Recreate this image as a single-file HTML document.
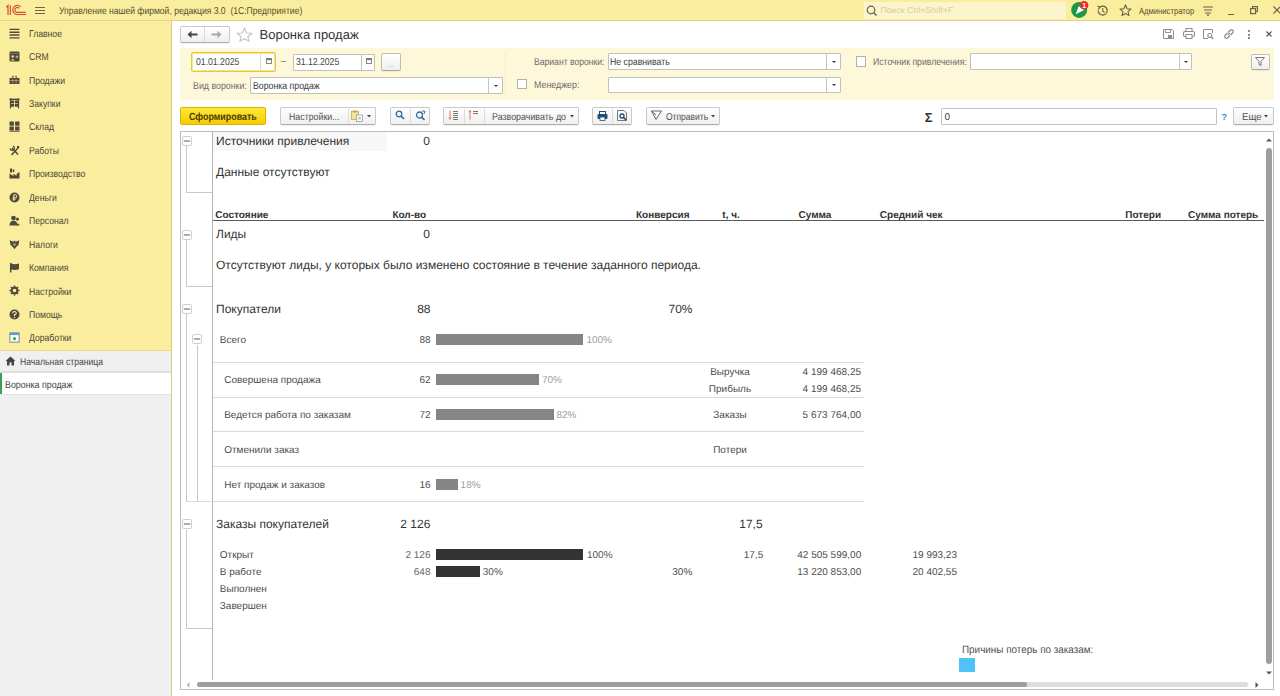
<!DOCTYPE html>
<html><head><meta charset="utf-8"><title>Воронка продаж</title>
<style>
html,body{margin:0;padding:0;width:1280px;height:696px;overflow:hidden;background:#fff;}
body{position:relative;font-family:"Liberation Sans", sans-serif;}
.t{position:absolute;white-space:nowrap;line-height:1;font-family:"Liberation Sans", sans-serif;text-rendering:geometricPrecision;}
.r{position:absolute;box-sizing:border-box;}
svg.r{overflow:visible;}
</style></head><body>
<div class="r" style="left:0px;top:0px;width:1280px;height:20px;background:#FBED9E;"></div><div class="r" style="left:0px;top:20px;width:1280px;height:1px;background:#E3D48A;"></div><svg class="r" style="left:6px;top:4px" width="21" height="12" viewBox="0 0 21 12"><g fill="none" stroke="#D64B2A" stroke-width="1.15">
<path d="M0.4 3.4 L2 1.4 V10.9"/><path d="M4.3 1.2 V10.9"/>
<path d="M14.8 2.8 A4.6 4.6 0 1 0 11.6 10.5 H19.9"/><path d="M13.2 4.5 A2.4 2.4 0 1 0 11.6 8.3 H19.9"/>
</g></svg><div class="r" style="left:35px;top:6.5px;width:10px;height:1.4px;background:#6E6540;"></div><div class="r" style="left:35px;top:9.5px;width:10px;height:1.4px;background:#6E6540;"></div><div class="r" style="left:35px;top:12.5px;width:10px;height:1.4px;background:#6E6540;"></div><div class="t" style="left:58.5px;top:7.30px;font-size:10px;color:#544D2E;font-weight:400;transform:scaleX(0.857);transform-origin:0 0;">Управление нашей фирмой, редакция 3.0&nbsp; (1С:Предприятие)</div><div class="r" style="left:864px;top:2px;width:202px;height:16.5px;background:#FCF4CC;"></div><svg class="r" style="left:866px;top:5px" width="12" height="12" viewBox="0 0 12 12"><circle cx="5" cy="5" r="3.8" fill="none" stroke="#6A6245" stroke-width="1.2"/><path d="M7.8 7.8 L10.5 10.5" stroke="#6A6245" stroke-width="1.5"/></svg><div class="t" style="left:880.5px;top:6.30px;font-size:8.7px;color:#D6CDA6;font-weight:400;">Поиск Ctrl+Shift+F</div><svg class="r" style="left:1070px;top:0px" width="20" height="19" viewBox="0 0 20 19"><circle cx="9.2" cy="9.9" r="8" fill="#1A9A48"/>
<path d="M5.8 14.2 L8.6 6.2 L14.5 9.8 Z" fill="#fff"/>
<circle cx="14.1" cy="5.3" r="4.3" fill="#E52D2D"/>
<text x="14.1" y="7.9" font-size="7" font-family="Liberation Sans" font-weight="700" fill="#fff" text-anchor="middle">1</text></svg><svg class="r" style="left:1096px;top:4px" width="13" height="13" viewBox="0 0 13 13"><path d="M2.2 6.5 A4.5 4.5 0 1 0 3.6 3.3" fill="none" stroke="#6A6245" stroke-width="1.2"/><path d="M1.5 2 L3.8 3.4 L2.2 5.6" fill="none" stroke="#6A6245" stroke-width="1.1"/><path d="M6.7 4 V7 L8.6 8.6" fill="none" stroke="#6A6245" stroke-width="1.1"/></svg><svg class="r" style="left:1119px;top:4px" width="13" height="13" viewBox="0 0 13 13"><path d="M6.5 1 L8.1 4.8 L12 5.1 L9 7.7 L10 11.6 L6.5 9.5 L3 11.6 L4 7.7 L1 5.1 L4.9 4.8 Z" fill="none" stroke="#6A6245" stroke-width="1.1" stroke-linejoin="round"/></svg><div class="t" style="left:1139px;top:6.90px;font-size:9px;color:#544D2E;font-weight:400;transform:scaleX(0.85);transform-origin:0 0;">Администратор</div><svg class="r" style="left:1202px;top:4px" width="12" height="13" viewBox="0 0 12 13"><path d="M1 3 H11 M2 6 H10 M3 9 H9" stroke="#6A6245" stroke-width="1.1"/><path d="M4.5 10.5 L7.5 10.5 L6 12.5 Z" fill="#6A6245"/></svg><div class="r" style="left:1227.5px;top:13.5px;width:6.5px;height:1.2px;background:#6A6245;"></div><svg class="r" style="left:1250px;top:6px" width="9" height="9" viewBox="0 0 9 9"><rect x="0.6" y="2.6" width="5" height="5" fill="none" stroke="#6A6245" stroke-width="1.2"/><path d="M2.5 2.5 V0.6 H7.4 V5.5 H5.6" fill="none" stroke="#6A6245" stroke-width="1.1"/></svg><svg class="r" style="left:1273px;top:6px" width="8" height="8" viewBox="0 0 8 8"><path d="M0.5 0.5 L7.5 7.5 M7.5 0.5 L0.5 7.5" stroke="#6A6245" stroke-width="1.1"/></svg><div class="r" style="left:0px;top:21px;width:171px;height:329px;background:#FBED9E;"></div><div class="r" style="left:171px;top:21px;width:1px;height:675px;background:#D8CB8C;"></div><div class="r" style="left:0px;top:350px;width:171px;height:346px;background:#F0F0F0;"></div><div class="r" style="left:0px;top:349.5px;width:171px;height:1px;background:#E9D98C;"></div><div class="r" style="left:0px;top:371px;width:171px;height:2px;background:#DEDEDE;"></div><div class="r" style="left:0px;top:373px;width:171px;height:21px;background:#FFFFFF;"></div><div class="r" style="left:0px;top:394px;width:171px;height:1px;background:#E4E4E4;"></div><div class="r" style="left:0px;top:373px;width:1.5px;height:21px;background:#3A9E5E;"></div><svg class="r" style="left:9px;top:27.5px" width="11" height="11" viewBox="0 0 11 11"><g transform="translate(0.5,0.5)"><path d="M0 0.9 H10 M0 3.7 H10 M0 6.5 H10 M0 9.3 H10" stroke="#4F4A3A" stroke-width="1.35"/></g></svg><div class="t" style="left:29px;top:29.60px;font-size:10px;color:#4A4535;font-weight:400;transform:scaleX(0.863);transform-origin:0 0;">Главное</div><svg class="r" style="left:9px;top:51.0px" width="11" height="11" viewBox="0 0 11 11"><g transform="translate(0.5,0.5)"><rect x="0" y="0" width="10" height="10" rx="1.2" fill="#4F4A3A"/><rect x="0.8" y="1.5" width="8.4" height="0.7" fill="#FBED9E" opacity=".35"/><circle cx="3.2" cy="5" r="1.3" fill="#FBED9E" opacity=".9"/><path d="M1.2 9 Q3.2 5.8 5.2 9Z" fill="#FBED9E" opacity=".9"/><rect x="6.2" y="4.2" width="2.4" height="2.2" fill="#FBED9E" opacity=".6"/></g></svg><div class="t" style="left:29px;top:53.05px;font-size:10px;color:#4A4535;font-weight:400;transform:scaleX(0.863);transform-origin:0 0;">CRM</div><svg class="r" style="left:9px;top:74.4px" width="11" height="11" viewBox="0 0 11 11"><g transform="translate(0.5,0.5)"><rect x="0" y="3.5" width="10" height="6" rx=".5" fill="#4F4A3A"/><path d="M3 3.5 L3.8 1.2 M7 3.5 L6.2 1.2" stroke="#4F4A3A" stroke-width="1.1"/><path d="M0.5 6 H9.5" stroke="#FBED9E" stroke-width=".7" opacity=".6"/><path d="M3.3 4 V9 M6.6 4 V9" stroke="#FBED9E" stroke-width=".7" opacity=".6"/></g></svg><div class="t" style="left:29px;top:76.50px;font-size:10px;color:#4A4535;font-weight:400;transform:scaleX(0.863);transform-origin:0 0;">Продажи</div><svg class="r" style="left:9px;top:97.8px" width="11" height="11" viewBox="0 0 11 11"><g transform="translate(0.5,0.5)"><path d="M0 0.8 H10" stroke="#4F4A3A" stroke-width="1.4"/><rect x="1" y="2" width="3.6" height="2.8" fill="#4F4A3A"/><rect x="5.4" y="2" width="3.6" height="2.8" fill="#4F4A3A"/><rect x="1" y="5.4" width="3.6" height="2.8" fill="#4F4A3A"/><rect x="5.4" y="5.4" width="3.6" height="2.8" fill="#4F4A3A"/><path d="M1 0 V10 M9 0 V10" stroke="#4F4A3A" stroke-width="1.2"/></g></svg><div class="t" style="left:29px;top:99.95px;font-size:10px;color:#4A4535;font-weight:400;transform:scaleX(0.863);transform-origin:0 0;">Закупки</div><svg class="r" style="left:9px;top:121.3px" width="11" height="11" viewBox="0 0 11 11"><g transform="translate(0.5,0.5)"><rect x="0" y="0" width="4.4" height="4.2" fill="#4F4A3A"/><rect x="5.6" y="0" width="4.4" height="4.2" fill="#4F4A3A"/><rect x="0" y="5" width="4.4" height="4" fill="#4F4A3A"/><rect x="5.6" y="5" width="4.4" height="4" fill="#4F4A3A"/><rect x="0" y="9.3" width="10" height="0.9" fill="#4F4A3A"/></g></svg><div class="t" style="left:29px;top:123.40px;font-size:10px;color:#4A4535;font-weight:400;transform:scaleX(0.863);transform-origin:0 0;">Склад</div><svg class="r" style="left:9px;top:144.8px" width="11" height="11" viewBox="0 0 11 11"><g transform="translate(0.5,0.5)"><path d="M2 9.5 L8.5 2.5 M2.5 2.5 L8.5 9" stroke="#4F4A3A" stroke-width="1.5"/><path d="M0.5 3 A2.2 2.2 0 1 0 3.5 0.5" fill="none" stroke="#4F4A3A" stroke-width="1.3"/><rect x="7.5" y="0.5" width="2.2" height="2.2" fill="#4F4A3A"/></g></svg><div class="t" style="left:29px;top:146.85px;font-size:10px;color:#4A4535;font-weight:400;transform:scaleX(0.863);transform-origin:0 0;">Работы</div><svg class="r" style="left:9px;top:168.2px" width="11" height="11" viewBox="0 0 11 11"><g transform="translate(0.5,0.5)"><path d="M0 10 V5 L4 7.5 V5 L7 7.5 V5.5 L10 3.5 V10 Z" fill="#4F4A3A"/><rect x="0.5" y="0" width="2" height="4" fill="#4F4A3A"/><rect x="3.2" y="1" width="1.6" height="2.5" fill="#4F4A3A"/></g></svg><div class="t" style="left:29px;top:170.30px;font-size:10px;color:#4A4535;font-weight:400;transform:scaleX(0.863);transform-origin:0 0;">Производство</div><svg class="r" style="left:9px;top:191.7px" width="11" height="11" viewBox="0 0 11 11"><g transform="translate(0.5,0.5)"><circle cx="5" cy="5" r="5" fill="#4F4A3A"/><path d="M4.3 8.3 V2.3 H5.9 A1.5 1.5 0 0 1 5.9 5.3 H3.2 M3.2 6.7 H6" stroke="#FBED9E" stroke-width="1" fill="none"/></g></svg><div class="t" style="left:29px;top:193.75px;font-size:10px;color:#4A4535;font-weight:400;transform:scaleX(0.863);transform-origin:0 0;">Деньги</div><svg class="r" style="left:9px;top:215.1px" width="11" height="11" viewBox="0 0 11 11"><g transform="translate(0.5,0.5)"><circle cx="4" cy="2.6" r="2.4" fill="#4F4A3A"/><path d="M0 10 Q0 5.3 4 5.3 Q8 5.3 8 10Z" fill="#4F4A3A"/><circle cx="8" cy="3.6" r="1.6" fill="#4F4A3A"/><path d="M7 10 Q9 6 10 10Z" fill="#4F4A3A"/></g></svg><div class="t" style="left:29px;top:217.20px;font-size:10px;color:#4A4535;font-weight:400;transform:scaleX(0.863);transform-origin:0 0;">Персонал</div><svg class="r" style="left:9px;top:238.5px" width="11" height="11" viewBox="0 0 11 11"><g transform="translate(0.5,0.5)"><path d="M5 1 L6.3 2.3 L9.8 0.8 L9 5.3 L6.5 7.8 L5 9.8 L3.5 7.8 L1 5.3 L0.2 0.8 L3.7 2.3 Z" fill="#4F4A3A"/><circle cx="5" cy="5" r="1.4" fill="#FBED9E" opacity=".5"/></g></svg><div class="t" style="left:29px;top:240.65px;font-size:10px;color:#4A4535;font-weight:400;transform:scaleX(0.863);transform-origin:0 0;">Налоги</div><svg class="r" style="left:9px;top:262.0px" width="11" height="11" viewBox="0 0 11 11"><g transform="translate(0.5,0.5)"><path d="M1.2 0.5 V10" stroke="#4F4A3A" stroke-width="1.5"/><path d="M1.5 1 Q5 2.6 9.5 1 V6.8 Q5 8.4 1.5 6.8Z" fill="#4F4A3A"/></g></svg><div class="t" style="left:29px;top:264.10px;font-size:10px;color:#4A4535;font-weight:400;transform:scaleX(0.863);transform-origin:0 0;">Компания</div><svg class="r" style="left:9px;top:285.4px" width="11" height="11" viewBox="0 0 11 11"><g transform="translate(0.5,0.5)"><circle cx="5" cy="5" r="2.8" fill="none" stroke="#4F4A3A" stroke-width="2"/><path d="M5 0 V2 M5 8 V10 M0 5 H2 M8 5 H10 M1.5 1.5 L3 3 M7 7 L8.5 8.5 M8.5 1.5 L7 3 M3 7 L1.5 8.5" stroke="#4F4A3A" stroke-width="1.7"/></g></svg><div class="t" style="left:29px;top:287.55px;font-size:10px;color:#4A4535;font-weight:400;transform:scaleX(0.863);transform-origin:0 0;">Настройки</div><svg class="r" style="left:9px;top:308.9px" width="11" height="11" viewBox="0 0 11 11"><g transform="translate(0.5,0.5)"><circle cx="5" cy="5" r="5" fill="#4F4A3A"/><path d="M3.3 3.8 Q3.3 2 5 2 Q6.8 2 6.8 3.6 Q6.8 4.7 5 5.4 V6.4" stroke="#FBED9E" stroke-width="1.2" fill="none"/><circle cx="5" cy="8" r=".75" fill="#FBED9E"/></g></svg><div class="t" style="left:29px;top:311.00px;font-size:10px;color:#4A4535;font-weight:400;transform:scaleX(0.863);transform-origin:0 0;">Помощь</div><svg class="r" style="left:9px;top:332.3px" width="11" height="11" viewBox="0 0 11 11"><g transform="translate(0.5,0.5)"><rect x="0.4" y="0.4" width="9.2" height="9.2" fill="#fff" stroke="#5F6B7A" stroke-width="0.8"/><rect x="0.4" y="0.4" width="9.2" height="2.2" fill="#5B9BD5"/><circle cx="5" cy="6.2" r="1.6" fill="#3DAA4A"/></g></svg><div class="t" style="left:29px;top:334.45px;font-size:10px;color:#4A4535;font-weight:400;transform:scaleX(0.863);transform-origin:0 0;">Доработки</div><svg class="r" style="left:5px;top:356px" width="11" height="10" viewBox="0 0 11 10"><path d="M5.5 0.5 L10.5 5 H9 V9.5 H6.5 V6.5 H4.5 V9.5 H2 V5 H0.5 Z" fill="#444"/></svg><div class="t" style="left:20.2px;top:358.30px;font-size:10px;color:#444;font-weight:400;transform:scaleX(0.8577);transform-origin:0 0;">Начальная страница</div><div class="t" style="left:4.7px;top:380.80px;font-size:10px;color:#444;font-weight:400;transform:scaleX(0.8843);transform-origin:0 0;">Воронка продаж</div><div class="r" style="left:172px;top:21px;width:1108px;height:675px;background:#fff;"></div>
<div class="r" style="left:180px;top:26px;width:50px;height:17px;background:linear-gradient(#FFFFFF,#EFEFEF);border:1px solid #C9C9C9;border-bottom-color:#ADADAD;border-radius:2px;box-shadow:0 1px 1px rgba(0,0,0,.06);"></div><div class="r" style="left:204px;top:27px;width:1px;height:15px;background:#DCDCDC;"></div><svg class="r" style="left:187px;top:30px" width="11" height="9" viewBox="0 0 11 9"><path d="M0.5 4.5 L4.5 0.8 L4.5 3.5 H10.5 V5.5 H4.5 V8.2 Z" fill="#444"/></svg><svg class="r" style="left:211px;top:30px" width="11" height="9" viewBox="0 0 11 9"><path d="M10.5 4.5 L6.5 0.8 L6.5 3.5 H0.5 V5.5 H6.5 V8.2 Z" fill="#A8A8A8"/></svg><svg class="r" style="left:236px;top:27px" width="17" height="15" viewBox="0 0 17 15"><path d="M8.5 1 L10.6 6 L16 6.3 L11.8 9.7 L13.2 14.3 L8.5 11.7 L3.8 14.3 L5.2 9.7 L1 6.3 L6.4 6 Z" fill="none" stroke="#C4C4C4" stroke-width="1.1" stroke-linejoin="round"/></svg><div class="t" style="left:259.5px;top:28.00px;font-size:13px;color:#333;font-weight:400;">Воронка продаж</div><svg class="r" style="left:1163px;top:29px" width="11" height="10" viewBox="0 0 11 10"><path d="M0.5 0.5 H9 L10.5 2 V9.5 H0.5 Z" fill="none" stroke="#8C8C8C" stroke-width="1"/><rect x="2.5" y="0.5" width="5" height="3" fill="none" stroke="#8C8C8C" stroke-width=".9"/><rect x="5" y="6" width="4" height="3.5" fill="#8C8C8C"/></svg><svg class="r" style="left:1183px;top:28px" width="12" height="11" viewBox="0 0 12 11"><rect x="3" y="0.5" width="6" height="3" fill="none" stroke="#8C8C8C" stroke-width="1"/><rect x="0.5" y="3.5" width="11" height="5" rx="1.5" fill="none" stroke="#8C8C8C" stroke-width="1.1"/><rect x="3" y="6.5" width="6" height="4" fill="#fff" stroke="#8C8C8C" stroke-width="1"/></svg><svg class="r" style="left:1203px;top:29px" width="11" height="11" viewBox="0 0 11 11"><path d="M8.5 0.5 H0.5 V9.5 H5" fill="none" stroke="#8C8C8C" stroke-width="1"/><path d="M0.5 0.5 H9.5 V4" fill="none" stroke="#8C8C8C" stroke-width="1"/><circle cx="6.8" cy="6.5" r="2" fill="none" stroke="#8C8C8C" stroke-width="1.1"/><path d="M8.3 8 L10.3 10" stroke="#8C8C8C" stroke-width="1.3"/></svg><svg class="r" style="left:1223px;top:28px" width="12" height="12" viewBox="0 0 12 12"><path d="M5 7 L7 5" stroke="#8C8C8C" stroke-width="1.1"/><path d="M4.5 5 L2 7.5 A1.8 1.8 0 0 0 4.5 10 L7 7.5" fill="none" stroke="#8C8C8C" stroke-width="1.2"/><path d="M7.5 7 L10 4.5 A1.8 1.8 0 0 0 7.5 2 L5 4.5" fill="none" stroke="#8C8C8C" stroke-width="1.2"/></svg><div class="r" style="left:1247.5px;top:30px;width:2px;height:2px;background:#8C8C8C;"></div><div class="r" style="left:1247.5px;top:33.5px;width:2px;height:2px;background:#8C8C8C;"></div><div class="r" style="left:1247.5px;top:37px;width:2px;height:2px;background:#8C8C8C;"></div><svg class="r" style="left:1266px;top:31px" width="6" height="6" viewBox="0 0 6 6"><path d="M0.5 0.5 L5.5 5.5 M5.5 0.5 L0.5 5.5" stroke="#555" stroke-width="1.1"/></svg><div class="r" style="left:180px;top:48px;width:1094px;height:52px;background:#FEF8DA;"></div><div class="r" style="left:505px;top:52px;width:1px;height:46px;border-left:1px dotted #F0E6C2;"></div><div class="r" style="left:191px;top:52px;width:85px;height:20px;background:#fff;border:1px solid #E3C64C;box-shadow:inset 0 0 0 1px #F8E58A;border-radius:2px;"></div><div class="r" style="left:260px;top:54px;width:1px;height:16px;background:#D8D8D8;"></div><svg class="r" style="left:266px;top:57.5px" width="6" height="6" viewBox="0 0 6 6"><rect x="0.5" y="0.5" width="5" height="5" fill="none" stroke="#888" stroke-width="1"/><rect x="0.5" y="0.5" width="5" height="1.6" fill="#777"/></svg><div class="t" style="left:195.6px;top:57.90px;font-size:10px;color:#444;font-weight:400;transform:scaleX(0.8669);transform-origin:0 0;">01.01.2025</div><div class="t" style="left:281px;top:57.20px;font-size:9px;color:#555;font-weight:400;">–</div><div class="r" style="left:293px;top:53.5px;width:81.5px;height:17px;background:#fff;border:1px solid #C4C0B5;border-radius:1px;"></div><div class="r" style="left:360.5px;top:54px;width:1px;height:16px;background:#C9C5BA;"></div><svg class="r" style="left:365.5px;top:57.5px" width="6" height="6" viewBox="0 0 6 6"><rect x="0.5" y="0.5" width="5" height="5" fill="none" stroke="#888" stroke-width="1"/><rect x="0.5" y="0.5" width="5" height="1.6" fill="#777"/></svg><div class="t" style="left:296px;top:57.90px;font-size:10px;color:#444;font-weight:400;transform:scaleX(0.8629);transform-origin:0 0;">31.12.2025</div><div class="r" style="left:381px;top:53px;width:20px;height:18px;background:linear-gradient(#FFFFFF,#EFEFEF);border:1px solid #C2BDB0;border-bottom-color:#ABA697;border-radius:2px;box-shadow:0 1px 1px rgba(0,0,0,.06);"></div><div class="t" style="left:387.5px;top:62.00px;font-size:7px;color:#999;font-weight:400;">...</div><div class="t" style="left:193px;top:81.90px;font-size:10px;color:#6A6A6A;font-weight:400;transform:scaleX(0.8817);transform-origin:0 0;">Вид воронки:</div><div class="r" style="left:250px;top:77px;width:252.5px;height:16.5px;background:#fff;border:1px solid #C4C0B5;border-radius:1px;"></div><div class="r" style="left:488px;top:78px;width:1px;height:14.5px;background:#C9C5BA;"></div><svg class="r" style="left:493.5px;top:84.5px" width="4" height="2" viewBox="0 0 4 2"><path d="M0 0 H4 L2 2Z" fill="#333"/></svg><div class="t" style="left:252.9px;top:81.90px;font-size:10px;color:#3A3A3A;font-weight:400;transform:scaleX(0.8751);transform-origin:0 0;">Воронка продаж</div><div class="t" style="left:534.4px;top:58.20px;font-size:10px;color:#6A6A6A;font-weight:400;transform:scaleX(0.8601);transform-origin:0 0;">Вариант воронки:</div><div class="r" style="left:608px;top:53px;width:233px;height:17px;background:#fff;border:1px solid #C4C0B5;border-radius:1px;"></div><div class="r" style="left:826px;top:54px;width:1px;height:15px;background:#C9C5BA;"></div><svg class="r" style="left:831.5px;top:60.5px" width="4" height="2" viewBox="0 0 4 2"><path d="M0 0 H4 L2 2Z" fill="#333"/></svg><div class="t" style="left:610.4px;top:58.20px;font-size:10px;color:#3A3A3A;font-weight:400;transform:scaleX(0.8723);transform-origin:0 0;">Не сравнивать</div><div class="r" style="left:516.5px;top:78.5px;width:10.5px;height:10.5px;background:#fff;border:1px solid #B5B1A6;"></div><div class="t" style="left:534.2px;top:81.40px;font-size:10px;color:#6A6A6A;font-weight:400;transform:scaleX(0.8850);transform-origin:0 0;">Менеджер:</div><div class="r" style="left:608px;top:76.5px;width:233px;height:16px;background:#fff;border:1px solid #C4C0B5;border-radius:1px;"></div><div class="r" style="left:826px;top:77.5px;width:1px;height:14px;background:#C9C5BA;"></div><svg class="r" style="left:831.5px;top:84px" width="4" height="2" viewBox="0 0 4 2"><path d="M0 0 H4 L2 2Z" fill="#333"/></svg><div class="r" style="left:855.5px;top:56px;width:10px;height:10.5px;background:#fff;border:1px solid #B5B1A6;"></div><div class="t" style="left:872.6px;top:58.20px;font-size:10px;color:#6A6A6A;font-weight:400;transform:scaleX(0.8664);transform-origin:0 0;">Источник привлечения:</div><div class="r" style="left:970px;top:52.5px;width:222px;height:17.5px;background:#fff;border:1px solid #C4C0B5;border-radius:1px;"></div><div class="r" style="left:1178.5px;top:53.5px;width:1px;height:15.5px;background:#C9C5BA;"></div><svg class="r" style="left:1183.5px;top:60.5px" width="4" height="2" viewBox="0 0 4 2"><path d="M0 0 H4 L2 2Z" fill="#333"/></svg><div class="r" style="left:1250.5px;top:53.5px;width:19.5px;height:16.5px;background:linear-gradient(#FFFFFF,#EFEFEF);border:1px solid #C2BDB0;border-bottom-color:#ABA697;border-radius:2px;box-shadow:0 1px 1px rgba(0,0,0,.06);"></div><svg class="r" style="left:1255px;top:57px" width="10" height="9" viewBox="0 0 10 9"><path d="M0.5 0.5 H9.5 L6 4.5 V8.5 L4 7.5 V4.5 Z" fill="none" stroke="#777" stroke-width="1"/></svg><div class="r" style="left:180px;top:107px;width:86px;height:18px;background:linear-gradient(#FFE83A,#F5CC00);border:1px solid #D9B300;border-radius:2px;"></div><div class="t" style="left:189.2px;top:113.20px;font-size:10.3px;color:#473C00;font-weight:700;transform:scaleX(0.8646);transform-origin:0 0;">Сформировать</div><div class="r" style="left:279.5px;top:107px;width:96px;height:18px;background:linear-gradient(#FFFFFF,#EFEFEF);border:1px solid #C9C9C9;border-bottom-color:#ADADAD;border-radius:2px;box-shadow:0 1px 1px rgba(0,0,0,.06);"></div><div class="r" style="left:348px;top:108.5px;width:1px;height:15px;background:#DCDCDC;"></div><div class="t" style="left:288.5px;top:112.80px;font-size:10px;color:#505050;font-weight:400;transform:scaleX(0.8802);transform-origin:0 0;">Настройки...</div><svg class="r" style="left:351px;top:110px" width="13" height="12" viewBox="0 0 13 12"><rect x="0.5" y="1.5" width="7" height="8" fill="#F6E3A0" stroke="#C9A640" stroke-width=".8"/><rect x="2" y="0.5" width="4" height="2" fill="#C9A640"/><rect x="5.5" y="5" width="6" height="6.5" fill="#fff" stroke="#999" stroke-width=".8"/><path d="M7 7.5 H10 M7 9 H10" stroke="#888" stroke-width=".6"/></svg><svg class="r" style="left:367px;top:115px" width="5" height="3" viewBox="0 0 5 3"><path d="M0 0 H4 L2 2.5Z" fill="#444"/></svg><div class="r" style="left:389.5px;top:107px;width:40px;height:18px;background:linear-gradient(#FFFFFF,#EFEFEF);border:1px solid #C9C9C9;border-bottom-color:#ADADAD;border-radius:2px;box-shadow:0 1px 1px rgba(0,0,0,.06);"></div><div class="r" style="left:409.5px;top:108.5px;width:1px;height:15px;background:#DCDCDC;"></div><svg class="r" style="left:395px;top:110px" width="10" height="10" viewBox="0 0 10 10"><circle cx="4" cy="4" r="2.8" fill="none" stroke="#2E6DA4" stroke-width="1.3"/><path d="M6 6 L9 9" stroke="#2E6DA4" stroke-width="1.7"/></svg><svg class="r" style="left:415px;top:110px" width="11" height="11" viewBox="0 0 11 11"><circle cx="4.5" cy="5" r="3" fill="none" stroke="#2E6DA4" stroke-width="1.3"/><path d="M6.8 7.3 L9.5 10" stroke="#2E6DA4" stroke-width="1.7"/><path d="M7 0.8 L10 1.5 L8.8 4" fill="none" stroke="#2E6DA4" stroke-width="1"/></svg><div class="r" style="left:443px;top:107px;width:135.5px;height:18px;background:linear-gradient(#FFFFFF,#EFEFEF);border:1px solid #C9C9C9;border-bottom-color:#ADADAD;border-radius:2px;box-shadow:0 1px 1px rgba(0,0,0,.06);"></div><div class="r" style="left:463.5px;top:108.5px;width:1px;height:15px;background:#DCDCDC;"></div><div class="r" style="left:483.5px;top:108.5px;width:1px;height:15px;background:#DCDCDC;"></div><svg class="r" style="left:448px;top:110px" width="11" height="11" viewBox="0 0 11 11"><path d="M2 0.5 V9 M0.7 7.7 L2 9.5 L3.3 7.7" stroke="#E06A4E" stroke-width="0.9" fill="none"/><path d="M5 1.5 H10 M5 3.5 H10 M5 5.5 H10 M5 7.5 H10 M5 9.5 H10" stroke="#777" stroke-width="1"/></svg><svg class="r" style="left:468px;top:110px" width="11" height="11" viewBox="0 0 11 11"><path d="M2 9.5 V1 M0.7 2.3 L2 0.5 L3.3 2.3" stroke="#E06A4E" stroke-width="0.9" fill="none"/><path d="M5 1.5 H10 M5 3.5 H10" stroke="#777" stroke-width="1.2"/></svg><div class="t" style="left:492px;top:112.80px;font-size:10px;color:#505050;font-weight:400;transform:scaleX(0.8879);transform-origin:0 0;">Разворачивать до</div><svg class="r" style="left:569.5px;top:115px" width="5" height="3" viewBox="0 0 5 3"><path d="M0 0 H4 L2 2.5Z" fill="#444"/></svg><div class="r" style="left:592px;top:107px;width:40px;height:18px;background:linear-gradient(#FFFFFF,#EFEFEF);border:1px solid #C9C9C9;border-bottom-color:#ADADAD;border-radius:2px;box-shadow:0 1px 1px rgba(0,0,0,.06);"></div><div class="r" style="left:612px;top:108.5px;width:1px;height:15px;background:#DCDCDC;"></div><svg class="r" style="left:596.5px;top:110.5px" width="11" height="10" viewBox="0 0 11 10"><rect x="2.5" y="0.5" width="6" height="3" fill="none" stroke="#1F4E79" stroke-width="1"/><rect x="0.5" y="3" width="10" height="5" rx="1" fill="#1F4E79"/><rect x="3" y="6" width="5" height="3.5" fill="#fff" stroke="#1F4E79" stroke-width=".8"/></svg><svg class="r" style="left:617px;top:110px" width="10" height="11" viewBox="0 0 10 11"><path d="M0.5 0.5 H7 L9.5 3 V10.5 H0.5 Z" fill="none" stroke="#777" stroke-width="1"/><circle cx="5" cy="6" r="2" fill="none" stroke="#1F4E79" stroke-width="1.3"/><path d="M6.5 7.5 L9 10" stroke="#1F4E79" stroke-width="1.6"/></svg><div class="r" style="left:646px;top:107px;width:74px;height:18px;background:linear-gradient(#FFFFFF,#EFEFEF);border:1px solid #C9C9C9;border-bottom-color:#ADADAD;border-radius:2px;box-shadow:0 1px 1px rgba(0,0,0,.06);"></div><svg class="r" style="left:651px;top:110px" width="11" height="10" viewBox="0 0 11 10"><path d="M0.5 1 L10.5 1 L5 9.5 Z M0.5 1 L5 5" fill="none" stroke="#666" stroke-width="1"/></svg><div class="t" style="left:665.8px;top:112.80px;font-size:10px;color:#505050;font-weight:400;transform:scaleX(0.8489);transform-origin:0 0;">Отправить</div><svg class="r" style="left:711px;top:115px" width="5" height="3" viewBox="0 0 5 3"><path d="M0 0 H4 L2 2.5Z" fill="#444"/></svg><div class="t" style="left:924.8px;top:110.60px;font-size:13px;color:#333;font-weight:700;">Σ</div><div class="r" style="left:941px;top:108px;width:275.5px;height:17px;background:#fff;border:1px solid #C4C4C4;border-radius:1px;"></div><div class="t" style="left:944.6px;top:112.80px;font-size:10px;color:#444;font-weight:400;">0</div><div class="t" style="left:1221.5px;top:113.00px;font-size:9px;color:#3A8FD6;font-weight:700;">?</div><div class="r" style="left:1233px;top:107px;width:40.5px;height:18px;background:linear-gradient(#FFFFFF,#EFEFEF);border:1px solid #C9C9C9;border-bottom-color:#ADADAD;border-radius:2px;box-shadow:0 1px 1px rgba(0,0,0,.06);"></div><div class="t" style="left:1241.8px;top:112.80px;font-size:10px;color:#505050;font-weight:400;transform:scaleX(0.9578);transform-origin:0 0;">Еще</div><svg class="r" style="left:1264px;top:115px" width="5" height="3" viewBox="0 0 5 3"><path d="M0 0 H4 L2 2.5Z" fill="#444"/></svg><div class="r" style="left:180px;top:131px;width:1094px;height:559px;border:1px solid #BDBDBD;background:#fff;"></div><div class="r" style="left:213px;top:132px;width:174px;height:18.5px;background:#F7F7F7;"></div><div class="r" style="left:212px;top:132px;width:1px;height:547.5px;background:#B3B3B3;"></div><svg class="r" style="left:182px;top:135.5px" width="10" height="10" viewBox="0 0 10 10"><rect x="0.5" y="0.5" width="9" height="9" rx="1.5" fill="#fff" stroke="#CFCFCF" stroke-width="1"/><path d="M1.8 5 H8.2" stroke="#8A8A8A" stroke-width="1.4"/></svg><div class="r" style="left:186px;top:145.5px;width:1px;height:47.0px;background:#C8C8C8;"></div><div class="r" style="left:186px;top:192px;width:26px;height:1px;background:#C8C8C8;"></div><svg class="r" style="left:182px;top:229.5px" width="10" height="10" viewBox="0 0 10 10"><rect x="0.5" y="0.5" width="9" height="9" rx="1.5" fill="#fff" stroke="#CFCFCF" stroke-width="1"/><path d="M1.8 5 H8.2" stroke="#8A8A8A" stroke-width="1.4"/></svg><div class="r" style="left:186px;top:239.5px;width:1px;height:47.0px;background:#C8C8C8;"></div><div class="r" style="left:186px;top:286px;width:26px;height:1px;background:#C8C8C8;"></div><svg class="r" style="left:182px;top:304px" width="10" height="10" viewBox="0 0 10 10"><rect x="0.5" y="0.5" width="9" height="9" rx="1.5" fill="#fff" stroke="#CFCFCF" stroke-width="1"/><path d="M1.8 5 H8.2" stroke="#8A8A8A" stroke-width="1.4"/></svg><div class="r" style="left:186px;top:314px;width:1px;height:187.5px;background:#C8C8C8;"></div><svg class="r" style="left:192px;top:334px" width="10" height="10" viewBox="0 0 10 10"><rect x="0.5" y="0.5" width="9" height="9" rx="1.5" fill="#fff" stroke="#CFCFCF" stroke-width="1"/><path d="M1.8 5 H8.2" stroke="#8A8A8A" stroke-width="1.4"/></svg><div class="r" style="left:196.5px;top:344.5px;width:1px;height:157.0px;background:#C8C8C8;"></div><svg class="r" style="left:182px;top:519px" width="10" height="10" viewBox="0 0 10 10"><rect x="0.5" y="0.5" width="9" height="9" rx="1.5" fill="#fff" stroke="#CFCFCF" stroke-width="1"/><path d="M1.8 5 H8.2" stroke="#8A8A8A" stroke-width="1.4"/></svg><div class="r" style="left:186px;top:529.5px;width:1px;height:98.5px;background:#C8C8C8;"></div><div class="r" style="left:186px;top:627.5px;width:26px;height:1px;background:#C8C8C8;"></div><div class="t" style="left:216px;top:134.60px;font-size:12px;color:#333;font-weight:400;">Источники привлечения</div><div class="t" style="right:850px;top:134.60px;font-size:12px;color:#333;font-weight:400;">0</div><div class="t" style="left:216px;top:165.50px;font-size:12px;color:#333;font-weight:400;">Данные отсутствуют</div><div class="t" style="left:215.3px;top:211.20px;font-size:10px;color:#333;font-weight:700;">Состояние</div><div class="t" style="left:392.4px;top:211.20px;font-size:10px;color:#333;font-weight:700;">Кол-во</div><div class="t" style="left:636px;top:211.20px;font-size:10px;color:#333;font-weight:700;">Конверсия</div><div class="t" style="left:722.3px;top:211.20px;font-size:10px;color:#333;font-weight:700;">t, ч.</div><div class="t" style="left:798.5px;top:211.20px;font-size:10px;color:#333;font-weight:700;">Сумма</div><div class="t" style="left:879.8px;top:211.20px;font-size:10px;color:#333;font-weight:700;">Средний чек</div><div class="t" style="left:1125.3px;top:211.20px;font-size:10px;color:#333;font-weight:700;">Потери</div><div class="t" style="left:1188px;top:211.20px;font-size:10px;color:#333;font-weight:700;">Сумма потерь</div><div class="r" style="left:213px;top:220px;width:1051px;height:1px;background:#5A5A5A;"></div><div class="t" style="left:216px;top:228.00px;font-size:12px;color:#333;font-weight:400;">Лиды</div><div class="t" style="right:850px;top:228.00px;font-size:12px;color:#333;font-weight:400;">0</div><div class="t" style="left:216px;top:259.00px;font-size:12px;color:#333;font-weight:400;">Отсутствуют лиды, у которых было изменено состояние в течение заданного периода.</div><div class="t" style="left:216px;top:303.00px;font-size:12px;color:#333;font-weight:400;">Покупатели</div><div class="t" style="right:849.5px;top:303.00px;font-size:12px;color:#333;font-weight:400;">88</div><div class="t" style="right:587.5px;top:303.00px;font-size:12px;color:#333;font-weight:400;">70%</div><div class="t" style="left:219.8px;top:336.20px;font-size:10px;color:#4D4D4D;font-weight:400;">Всего</div><div class="t" style="right:849.5px;top:336.20px;font-size:10px;color:#4D4D4D;font-weight:400;">88</div><div class="r" style="left:435.5px;top:334px;width:147.5px;height:11px;background:#858585;"></div><div class="t" style="left:586.4px;top:336.20px;font-size:10px;color:#A0A0A0;font-weight:400;">100%</div><div class="r" style="left:213px;top:361.5px;width:651px;height:1px;background:#DADADA;"></div><div class="t" style="left:224.2px;top:376.00px;font-size:10px;color:#4D4D4D;font-weight:400;">Совершена продажа</div><div class="t" style="right:849.5px;top:376.00px;font-size:10px;color:#4D4D4D;font-weight:400;">62</div><div class="r" style="left:435.5px;top:374px;width:103.5px;height:11px;background:#858585;"></div><div class="t" style="left:542px;top:376.00px;font-size:10px;color:#A0A0A0;font-weight:400;">70%</div><div class="t" style="left:530px;width:400px;text-align:center;top:367.70px;font-size:10px;color:#4D4D4D;font-weight:400;">Выручка</div><div class="t" style="right:419px;top:367.70px;font-size:10px;color:#4D4D4D;font-weight:400;">4 199 468,25</div><div class="t" style="left:530px;width:400px;text-align:center;top:385.00px;font-size:10px;color:#4D4D4D;font-weight:400;">Прибыль</div><div class="t" style="right:419px;top:385.00px;font-size:10px;color:#4D4D4D;font-weight:400;">4 199 468,25</div><div class="r" style="left:213px;top:396.5px;width:651px;height:1px;background:#DADADA;"></div><div class="t" style="left:224.2px;top:411.00px;font-size:10px;color:#4D4D4D;font-weight:400;">Ведется работа по заказам</div><div class="t" style="right:849.5px;top:411.00px;font-size:10px;color:#4D4D4D;font-weight:400;">72</div><div class="r" style="left:435.5px;top:409px;width:118.0px;height:11px;background:#858585;"></div><div class="t" style="left:556.5px;top:411.00px;font-size:10px;color:#A0A0A0;font-weight:400;">82%</div><div class="t" style="left:530px;width:400px;text-align:center;top:411.00px;font-size:10px;color:#4D4D4D;font-weight:400;">Заказы</div><div class="t" style="right:419px;top:411.00px;font-size:10px;color:#4D4D4D;font-weight:400;">5 673 764,00</div><div class="r" style="left:213px;top:431px;width:651px;height:1px;background:#DADADA;"></div><div class="t" style="left:224.2px;top:446.00px;font-size:10px;color:#4D4D4D;font-weight:400;">Отменили заказ</div><div class="t" style="left:530px;width:400px;text-align:center;top:446.00px;font-size:10px;color:#4D4D4D;font-weight:400;">Потери</div><div class="r" style="left:213px;top:466px;width:651px;height:1px;background:#DADADA;"></div><div class="t" style="left:224.2px;top:481.00px;font-size:10px;color:#4D4D4D;font-weight:400;">Нет продаж и заказов</div><div class="t" style="right:849.5px;top:481.00px;font-size:10px;color:#4D4D4D;font-weight:400;">16</div><div class="r" style="left:435.5px;top:479px;width:22.5px;height:11px;background:#858585;"></div><div class="t" style="left:460.6px;top:481.00px;font-size:10px;color:#A0A0A0;font-weight:400;">18%</div><div class="r" style="left:186px;top:501px;width:678px;height:1px;background:#DADADA;"></div><div class="t" style="left:216px;top:518.20px;font-size:12px;color:#333;font-weight:400;">Заказы покупателей</div><div class="t" style="right:849.7px;top:518.20px;font-size:12px;color:#333;font-weight:400;">2 126</div><div class="t" style="right:517.4px;top:518.20px;font-size:12px;color:#333;font-weight:400;">17,5</div><div class="t" style="left:219.8px;top:551.20px;font-size:10px;color:#4D4D4D;font-weight:400;">Открыт</div><div class="t" style="right:849.5px;top:551.20px;font-size:10px;color:#666;font-weight:400;">2 126</div><div class="r" style="left:435.5px;top:549px;width:147.5px;height:11px;background:#333;"></div><div class="t" style="left:587px;top:551.20px;font-size:10px;color:#555;font-weight:400;">100%</div><div class="t" style="right:516.8px;top:551.20px;font-size:10px;color:#4D4D4D;font-weight:400;">17,5</div><div class="t" style="right:418.79999999999995px;top:551.20px;font-size:10px;color:#4D4D4D;font-weight:400;">42 505 599,00</div><div class="t" style="right:323px;top:551.20px;font-size:10px;color:#4D4D4D;font-weight:400;">19 993,23</div><div class="t" style="left:219.8px;top:568.20px;font-size:10px;color:#4D4D4D;font-weight:400;">В работе</div><div class="t" style="right:849.5px;top:568.20px;font-size:10px;color:#666;font-weight:400;">648</div><div class="r" style="left:435.5px;top:566px;width:44.5px;height:11px;background:#333;"></div><div class="t" style="left:482.8px;top:568.20px;font-size:10px;color:#555;font-weight:400;">30%</div><div class="t" style="right:587.7px;top:568.20px;font-size:10px;color:#4D4D4D;font-weight:400;">30%</div><div class="t" style="right:418.79999999999995px;top:568.20px;font-size:10px;color:#4D4D4D;font-weight:400;">13 220 853,00</div><div class="t" style="right:323px;top:568.20px;font-size:10px;color:#4D4D4D;font-weight:400;">20 402,55</div><div class="t" style="left:219.8px;top:585.20px;font-size:10px;color:#4D4D4D;font-weight:400;">Выполнен</div><div class="t" style="left:219.8px;top:602.20px;font-size:10px;color:#4D4D4D;font-weight:400;">Завершен</div><div class="t" style="left:961.8px;top:644.90px;font-size:10.6px;color:#505050;font-weight:400;transform:scaleX(0.9343);transform-origin:0 0;">Причины потерь по заказам:</div><div class="r" style="left:959px;top:658px;width:15.5px;height:13.5px;background:#4FC3F7;"></div><div class="r" style="left:1266px;top:148px;width:5.5px;height:515.5px;background:#9E9E9E;border-radius:3px;"></div><svg class="r" style="left:1266px;top:138px" width="6" height="4" viewBox="0 0 6 4"><path d="M0 3.5 L3 0.5 L6 3.5Z" fill="#555"/></svg><svg class="r" style="left:1266px;top:670.5px" width="6" height="4" viewBox="0 0 6 4"><path d="M0 0.5 L3 3.5 L6 0.5Z" fill="#555"/></svg><div class="r" style="left:196.5px;top:682px;width:1051.5px;height:5px;background:#DDDDDD;border-radius:2.5px;"></div><div class="r" style="left:196.5px;top:682px;width:830px;height:5px;background:#9E9E9E;border-radius:2.5px;"></div><svg class="r" style="left:186px;top:682px" width="4" height="6" viewBox="0 0 4 6"><path d="M3.5 0 L0.5 3 L3.5 6Z" fill="#BBB"/></svg><svg class="r" style="left:1255px;top:681.5px" width="4" height="6" viewBox="0 0 4 6"><path d="M0.5 0 L3.5 3 L0.5 6Z" fill="#555"/></svg>
</body></html>
